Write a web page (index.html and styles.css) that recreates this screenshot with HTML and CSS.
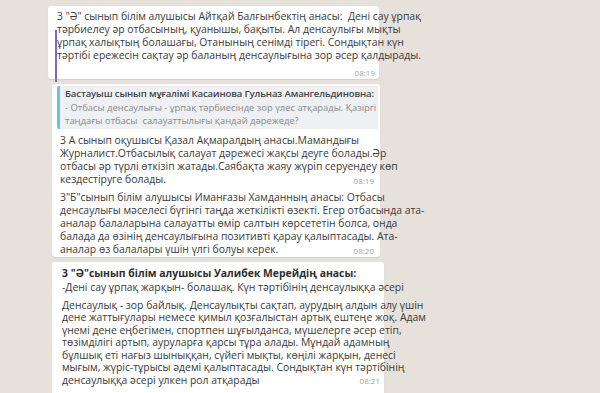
FILE: index.html
```html
<!DOCTYPE html>
<html lang="kk">
<head>
    <meta charset="UTF-8">
    <meta name="viewport" content="width=device-width, initial-scale=1.0">
    <title>Чат</title>
    <link rel="stylesheet" href="styles.css">
</head>
<body>
    <div class="chat">
        <div class="bubble first">
            <span class="side-bar"></span>
            <p class="text">3 "Ә" сынып білім алушысы Айтқай Балғынбектің анасы:&nbsp; Дені сау ұрпақ<br>
            тәрбиелеу әр отбасының, қуанышы, бақыты. Ал денсаулығы мықты<br>
            ұрпақ халықтың болашағы, Отанының сенімді тірегі. Сондықтан күн<br>
            тәртібі ережесін сақтау әр баланың денсаулығына зор әсер қалдырады.</p>
            <div class="time solo">08:19</div>
        </div>

        <div class="bubble second">
            <div class="quote">
                <div class="quote-name">Бастауыш сынып мұғалімі Касаинова Гульназ Амангельдиновна:</div>
                <div class="quote-text">- Отбасы денсаулығы - ұрпақ тәрбиесінде зор үлес атқарады. Қазіргі<br>
                таңдағы отбасы&nbsp; салауаттылығы қандай дәрежеде?</div>
            </div>
            <div class="msg">
                <p class="text">3 А сынып оқушысы Қазал Ақмаралдың анасы.Мамандығы<br>
                Журналист.Отбасылық салауат дәрежесі жақсы деуге болады.Әр<br>
                отбасы әр түрлі өткізіп жатады.Саябақта жаяу жүріп серуендеу көп<br>
                кездестіруге болады.</p>
                <span class="time">08:19</span>
            </div>
            <div class="msg">
                <p class="text">3"Б"сынып білім алушысы Иманғазы Хамданның анасы: Отбасы<br>
                денсаулығы мәселесі бүгінгі таңда жеткілікті өзекті. Егер отбасында ата-<br>
                аналар балаларына салауатты өмір салтын көрсететін болса, онда<br>
                балада да өзінің денсаулығына позитивті қарау қалыптасады. Ата-<br>
                аналар өз балалары үшін үлгі болуы керек.</p>
                <span class="time">08:20</span>
            </div>
        </div>

        <div class="bubble third">
            <div class="title">3 "Ә"сынып білім алушысы Уалибек Мерейдің анасы:</div>
            <p class="text sub">-Дені сау ұрпақ жарқын- болашақ. Күн тәртібінің денсаулыққа әсері</p>
            <div class="msg">
                <p class="text">Денсаулық - зор байлық. Денсаулықты сақтап, аурудың алдын алу үшін<br>
                дене жаттығулары немесе қимыл қозғалыстан артық ештеңе жоқ. Адам<br>
                үнемі дене еңбегімен, спортпен шұғылданса, мүшелерге әсер етіп,<br>
                төзімділігі артып, ауруларға қарсы тұра алады. Мұндай адамның<br>
                бұлшық еті нағыз шыныққан, сүйегі мықты, көңілі жарқын, денесі<br>
                мығым, жүріс-тұрысы әдемі қалыптасады. Сондықтан күн тәртібінің<br>
                денсаулыққа әсері улкен рол атқарады</p>
                <span class="time">08:21</span>
            </div>
        </div>
    </div>
</body>
</html>
```

FILE: styles.css
```css
body {
    margin: 0;
    background-color: #e7e1dc;
    font-family: "Open Sans", "Noto Sans", Arial, sans-serif;
    color: #3a3a3a;
    height: 393px;
    overflow: hidden;
}
.chat {
    display: flex;
    flex-direction: column;
    padding-top: 6px;
    height: 100%;
    box-sizing: border-box;
}
.bubble {
    position: relative;
    background-color: #fff;
    border-radius: 3px;
    box-shadow: 0 1px 1px rgba(0, 0, 0, 0.08);
}
.text {
    margin: 0;
    font-size: 10.4px;
    line-height: 13px;
    white-space: nowrap;
}
.time {
    font-size: 8px;
    line-height: 10px;
    color: #a5a5a5;
    flex-shrink: 0;
}
.first {
    margin-left: 48px;
    width: 331px;
    padding: 4px 0 0 9px;
    box-sizing: border-box;
    height: 73px;
    flex-shrink: 0;
}
.first .side-bar {
    position: absolute;
    left: 7px;
    top: 24px;
    bottom: -3px;
    width: 2px;
    background-color: #7d68c2;
}
.time.solo {
    text-align: right;
    margin: 6px 4px 0 0;
}
.second {
    margin-top: 5px;
    margin-left: 52px;
    width: 328px;
    padding: 2px 2px 1px 0;
    box-sizing: border-box;
    flex-shrink: 0;
}
.quote {
    margin-left: 5px;
    background-color: #eef0f3;
    border-left: 3px solid #5fc4e8;
    border-radius: 2px;
    padding: 1px 6px 1px 5px;
}
.quote-name {
    font-size: 9.6px;
    line-height: 13.5px;
    font-weight: 600;
    letter-spacing: -0.15px;
    color: #454545;
    white-space: nowrap;
}
.quote-text {
    font-size: 9.4px;
    line-height: 13.5px;
    color: #8a8a8a;
    white-space: nowrap;
}
.msg {
    display: flex;
    justify-content: space-between;
    align-items: flex-end;
    padding-left: 8px;
    padding-right: 4px;
}
.msg .text {
    flex: 1;
    min-width: 0;
}
.second .msg {
    margin-top: 5px;
}
.third {
    margin-top: 5px;
    margin-left: 52px;
    width: 332px;
    padding: 4px 0 0 2px;
    box-sizing: border-box;
    flex-grow: 1;
    border-radius: 3px 3px 0 0;
}
.third .msg .text {
    line-height: 12.5px;
}
.title {
    padding-left: 8px;
    font-size: 10.4px;
    line-height: 14px;
    font-weight: bold;
    color: #2e2e2e;
}
.sub {
    padding-left: 8px;
    margin-bottom: 5px;
    line-height: 14px;
}
```
